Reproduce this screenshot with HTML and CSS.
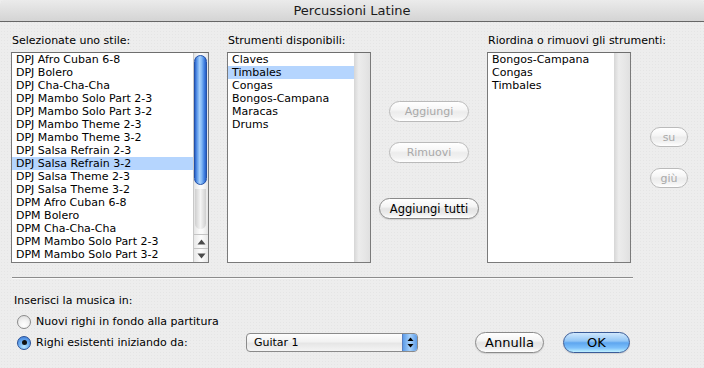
FILE: index.html
```html
<!DOCTYPE html>
<html lang="it">
<head>
<meta charset="utf-8">
<title>Percussioni Latine</title>
<link rel="stylesheet" href="styles.css">
</head>
<body>
<div class="window">
  <div class="titlebar">Percussioni Latine</div>
  <div class="content">
    <div class="lists">
      <div class="col col-styles">
        <div class="label">Selezionate uno stile:</div>
        <div class="listbox">
          <ul class="items">
            <li>DPJ Afro Cuban 6-8</li>
            <li>DPJ Bolero</li>
            <li>DPJ Cha-Cha-Cha</li>
            <li>DPJ Mambo Solo Part 2-3</li>
            <li>DPJ Mambo Solo Part 3-2</li>
            <li>DPJ Mambo Theme 2-3</li>
            <li>DPJ Mambo Theme 3-2</li>
            <li>DPJ Salsa Refrain 2-3</li>
            <li class="sel">DPJ Salsa Refrain 3-2</li>
            <li>DPJ Salsa Theme 2-3</li>
            <li>DPJ Salsa Theme 3-2</li>
            <li>DPM Afro Cuban 6-8</li>
            <li>DPM Bolero</li>
            <li>DPM Cha-Cha-Cha</li>
            <li>DPM Mambo Solo Part 2-3</li>
            <li>DPM Mambo Solo Part 3-2</li>
          </ul>
          <div class="scrollbar">
            <div class="track">
              <div class="thumb"></div>
            </div>
            <div class="arrow">
              <svg width="9" height="6" viewBox="0 0 9 6"><path d="M4.5 0.5 L8.5 5.5 L0.5 5.5 Z" fill="#4a4a4a"/></svg>
            </div>
            <div class="arrow">
              <svg width="9" height="6" viewBox="0 0 9 6"><path d="M0.5 0.5 L8.5 0.5 L4.5 5.5 Z" fill="#4a4a4a"/></svg>
            </div>
          </div>
        </div>
      </div>

      <div class="col col-avail">
        <div class="label">Strumenti disponibili:</div>
        <div class="listbox">
          <ul class="items">
            <li>Claves</li>
            <li class="sel">Timbales</li>
            <li>Congas</li>
            <li>Bongos-Campana</li>
            <li>Maracas</li>
            <li>Drums</li>
          </ul>
          <div class="noscroll"></div>
        </div>
      </div>

      <div class="col col-actions">
        <div class="btn disabled w80">Aggiungi</div>
        <div class="btn disabled w80 gap-rem">Rimuovi</div>
        <div class="btn w100 gap-all">Aggiungi tutti</div>
      </div>

      <div class="col col-order">
        <div class="label">Riordina o rimuovi gli strumenti:</div>
        <div class="listbox">
          <ul class="items">
            <li>Bongos-Campana</li>
            <li>Congas</li>
            <li>Timbales</li>
          </ul>
          <div class="noscroll"></div>
        </div>
      </div>

      <div class="col col-move">
        <div class="btn disabled small">su</div>
        <div class="btn disabled small gap-giu">giù</div>
      </div>
    </div>

    <div class="sep"></div>

    <div class="bottom">
      <div class="label-plain">Inserisci la musica in:</div>
      <div class="row">
        <span class="radio"></span>
        <span class="radio-text">Nuovi righi in fondo alla partitura</span>
      </div>
      <div class="row row-last">
        <div class="radio-group">
          <span class="radio on"><span class="dot"></span></span>
          <span class="radio-text">Righi esistenti iniziando da:</span>
        </div>
        <div class="popup">
          <span class="popup-text">Guitar 1</span>
          <span class="popup-arrows">
            <svg width="7" height="11" viewBox="0 0 7 11"><path d="M3.5 0.5 L6.5 4 L0.5 4 Z" fill="#000"/><path d="M0.5 7 L6.5 7 L3.5 10.5 Z" fill="#000"/></svg>
          </span>
        </div>
        <div class="btn big cancel">Annulla</div>
        <div class="btn big default ok">OK</div>
      </div>
    </div>
  </div>
</div>
</body>
</html>
```

FILE: styles.css
```css
* {
  box-sizing: border-box;
  margin: 0;
  padding: 0;
}

html, body {
  width: 704px;
  height: 368px;
  overflow: hidden;
}

body {
  font-family: "DejaVu Sans", "Noto Sans", sans-serif;
  font-size: 11px;
  color: #000;
  background-color: #ededed;
  background-image: radial-gradient(circle, rgba(0,0,0,0.035) 0.6px, transparent 0.8px);
  background-size: 3px 3px;
}

.window {
  width: 704px;
  height: 368px;
}

.titlebar {
  height: 22px;
  background: linear-gradient(#ebebeb, #d4d4d4);
  border-bottom: 1px solid #666;
  border-radius: 5px 5px 0 0;
  text-align: center;
  font-size: 13px;
  line-height: 21px;
  color: #1a1a1a;
}

.content {
  padding: 12px 0 0 11px;
}

.lists {
  display: flex;
  height: 229px;
}

.label {
  height: 13px;
  line-height: 13px;
  margin-bottom: 5px;
  padding-left: 1px;
  white-space: nowrap;
}

.listbox {
  height: 211px;
  border: 1px solid #7a7a7a;
  border-top-color: #6e6e6e;
  background: #fff;
  display: flex;
}

.items {
  flex: 1;
  list-style: none;
  overflow: hidden;
}

.items li {
  height: 13px;
  line-height: 13px;
  padding-left: 4px;
  white-space: nowrap;
  overflow: hidden;
}

.items li.sel {
  background: #b5d5fe;
}

.col-styles { width: 198px; }
.col-styles .listbox { width: 198px; }

.col-avail {
  width: 144px;
  margin-left: 18px;
}

.col-order { width: 144px; }

.scrollbar {
  width: 15px;
  border-left: 1px solid #c8c8c8;
  display: flex;
  flex-direction: column;
  background: linear-gradient(90deg, #e4e4e4, #fafafa 40%, #fafafa 60%, #e4e4e4);
}

.track {
  flex: 1;
  padding: 2px 1px 0 0;
}

.track::after {
  content: "";
  display: block;
  margin: 4px 1px 0 1px;
  height: 40px;
  border-radius: 0 0 6px 6px;
  background: linear-gradient(90deg, #cfcfcf, #f4f4f4 50%, #cfcfcf);
}

.thumb {
  height: 130px;
  border-radius: 7px;
  border: 1px solid #2452a8;
  background: linear-gradient(90deg, #2c62c8 0%, #5c98ea 18%, #a6d0fb 42%, #83b9f6 60%, #3f7ee0 85%, #2a5dc0 100%);
}

.arrow {
  height: 14px;
  border-top: 1px solid #c4c4c4;
  display: flex;
  align-items: center;
  justify-content: center;
  background: linear-gradient(90deg, #e8e8e8, #fdfdfd 50%, #e8e8e8);
}

.noscroll {
  width: 16px;
  background: linear-gradient(90deg, #d6d6d6, #ececec 30%, #e6e6e6 70%, #e0e0e0);
}

.col-actions {
  width: 116px;
  display: flex;
  flex-direction: column;
  align-items: center;
  padding-top: 67px;
}

.col-move {
  flex: 1;
  display: flex;
  flex-direction: column;
  align-items: center;
  padding: 93px 0 0 3px;
}

.btn {
  height: 21px;
  border-radius: 11px;
  border: 1px solid #8a8a8a;
  background: linear-gradient(#ffffff 0%, #f4f4f4 40%, #e4e4e4 52%, #ececec 78%, #ffffff 100%);
  box-shadow: 0 1px 1px rgba(0,0,0,0.12);
  display: flex;
  align-items: center;
  justify-content: center;
  font-size: 11px;
  white-space: nowrap;
}

.btn.disabled {
  color: #a9a9a9;
  border-color: #bababa;
  box-shadow: none;
  background: linear-gradient(#ffffff 0%, #f6f6f6 40%, #ececec 52%, #f2f2f2 78%, #ffffff 100%);
}

.w80 { width: 80px; }
.w100 { width: 100px; font-size: 11.5px; }
.gap-rem { margin-top: 20px; }
.gap-all { margin-top: 35px; }

.btn.small {
  width: 38px;
  height: 20px;
  font-size: 11px;
}

.gap-giu { margin-top: 21px; }

.sep {
  width: 621px;
  height: 2px;
  margin-top: 14px;
  margin-left: 1px;
  border-top: 1px solid #8c8c8c;
  border-bottom: 1px solid #fafafa;
}

.bottom {
  padding-left: 3px;
}

.label-plain {
  height: 13px;
  line-height: 13px;
  margin-top: 15px;
}

.row {
  display: flex;
  align-items: center;
  height: 21px;
  margin-top: 4px;
}

.row-last {
  margin-top: 0;
}

.radio-group {
  display: flex;
  align-items: center;
  width: 232px;
}

.radio {
  width: 14px;
  height: 14px;
  margin-left: 3px;
  border-radius: 50%;
  border: 1px solid #8a8a8a;
  background: radial-gradient(circle at 50% 75%, #ffffff 0%, #f2f2f2 45%, #d8d8d8 100%);
  display: flex;
  align-items: center;
  justify-content: center;
  flex-shrink: 0;
}

.radio.on {
  border-color: #274f96;
  background: radial-gradient(circle at 50% 80%, #b8e4ff 0%, #6fb0f2 45%, #3a78d6 100%);
}

.dot {
  width: 5px;
  height: 5px;
  border-radius: 50%;
  background: #111;
}

.radio-text {
  margin-left: 5px;
  white-space: nowrap;
  font-size: 11px;
}

.popup {
  width: 172px;
  height: 19px;
  border: 1px solid #8a8a8a;
  border-radius: 4px;
  background: linear-gradient(#fdfdfd 0%, #f2f2f2 45%, #e6e6e6 55%, #f4f4f4 100%);
  display: flex;
  align-items: center;
  overflow: hidden;
}

.popup-text {
  flex: 1;
  padding-left: 7px;
  font-size: 11px;
}

.popup-arrows {
  width: 15px;
  height: 17px;
  border-left: 1px solid #5a7fc0;
  background: linear-gradient(90deg, #5b9be8, #a9d2fb 50%, #5b9be8);
  display: flex;
  align-items: center;
  justify-content: center;
}

.btn.big {
  height: 21px;
  font-size: 13px;
}

.cancel {
  width: 69px;
  margin-left: 57px;
}

.ok {
  width: 67px;
  margin-left: 19px;
}

.btn.default {
  border-color: #3b5c98;
  background: linear-gradient(#d0e8fd 0%, #92c6f6 42%, #5ea6ef 52%, #7cc0fb 78%, #c0f1ff 100%);
}
```
